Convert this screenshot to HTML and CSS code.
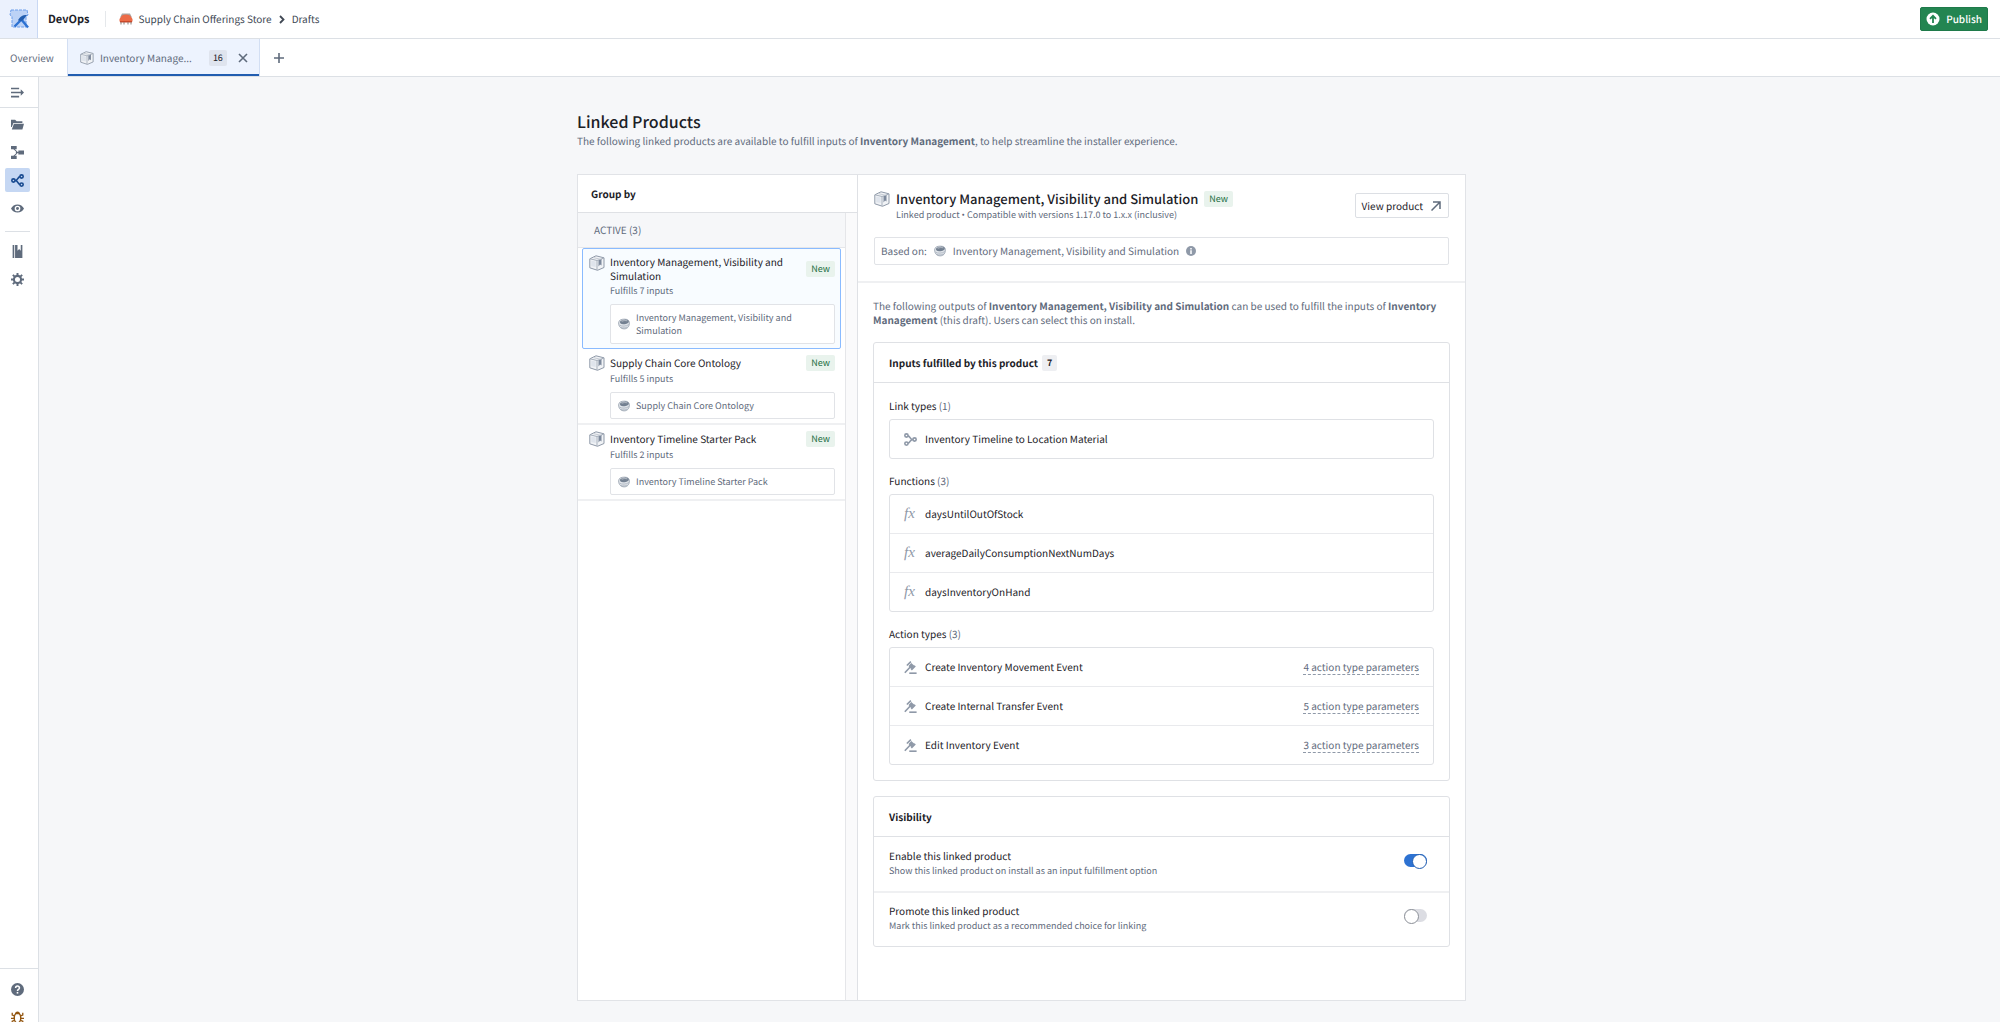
FILE: index.html
```html
<!DOCTYPE html>
<html lang="en">

<head>
    <meta charset="utf-8">
    <title>DevOps - Linked Products</title>
    <link rel="stylesheet" href="styles.css">
</head>

<body>
    <!-- shared icons -->
    <svg class="sprite" width="0" height="0">
        <symbol id="box" viewBox="0 0 16 16">
            <path d="M.8 3.800 7 .8 15 2.800v9.700l-6.500 2.800L.8 12.800z" fill="#f1f3f6" stroke="#8f99a8" />
            <path d="M1 3.800 8 5.500v9.500M8 5.500 15 3" fill="none" stroke="#a6afbb" />
            <path d="M2.200 5.500l4.500 1V12l-4.500-.8z" fill="#dfe4ec" />
            <path d="M9.500 5.300 12.500 4v6.500l-1.500-1-1.500 2z" fill="#7d899c" />
            <path d="M4 2.500l7.500 1.800" stroke="#c5cbd3" />
        </symbol>
        <symbol id="bowl" viewBox="0 0 16 16">
            <path d="M.8 6.500C.8 3 4 1.500 8.500 1.500s6.700 2 6.700 5c0 5-2.700 8-7 8s-7.400-3-7.400-8z" fill="#e1e5ea" stroke="#8f99a8" />
            <ellipse cx="8.500" cy="5.300" rx="6" ry="3" transform="rotate(-8 8 5)" fill="#738091" />
            <path d="M5 4.500c2-1.200 5-1.400 7.500-.7" stroke="#c5cbd3" fill="none" />
            <path d="M2 9.500c3 2 9 1.800 12.500-.8M4 12.700c2.500.8 6 .7 8.500-.7" stroke="#a6afbb" fill="none" />
        </symbol>
        <symbol id="link-type" viewBox="0 0 16 16">
            <g fill="none" stroke="currentColor" stroke-width="2">
                <circle cx="3" cy="3" r="2" />
                <circle cx="3" cy="13" r="2" />
                <circle cx="13" cy="8" r="2" />
                <path d="M5 3.500C8 4 7 8 11 8M5 12.500C8 12 7 8 11 8" />
            </g>
        </symbol>
        <symbol id="gavel" viewBox="0 0 16 16">
            <g fill="none" stroke="currentColor" stroke-width="2">
                <path d="M3.500 5.500 8.500.8M9 11l4.800-5M1 14.500 8 7" />
                <path d="M6.500 15h9" />
            </g>
            <path d="M5.500 6 9 2.500l4 3.500-4 4z" fill="currentColor" />
        </symbol>
    </svg>

    <header class="topbar">
        <a class="logo" href="#" aria-label="Home">
            <svg width="20" height="20" viewBox="0 0 20 20">
                <path d="M2 1h16l1 5-2 1.500V18H3V7.500L1 6z" fill="#bcd2f6" stroke="#6d9eeb" stroke-dasharray="3 1" />
                <path d="M5.500 17.500 14 9M12 10l7 8.500" stroke="#2d72d2" stroke-width="2.400" fill="none" />
                <path d="M9 11.500c1.500-3.500 4-5.500 9-5.500l-3.500 4.500-2 1.500z" fill="#215db0" />
            </svg>
        </a>
        <span class="app-name">DevOps</span>
        <nav class="crumbs">
            <svg width="14" height="12" viewBox="0 0 14 12">
                <path d="M3 .5h8l2 4H1z" fill="#a9a6a4" />
                <path d="M3 2.500Q7 .5 11 2.500L13.500 6v2.500H.5V6z" fill="#ec6b47" />
                <path d="M1 8h12v1.500H1z" fill="#c9492b" />
                <path d="M2 9v2.500M5 9v2.500M9 9v2.500M12 9v2.500" stroke="#8a7f7b" />
            </svg>
            <a href="#">Supply Chain Offerings Store</a>
            <svg class="chevron" width="6" height="9" viewBox="0 0 6 9">
                <path d="m1 1 3.500 3.500L1 8" fill="none" stroke="currentColor" stroke-width="1.800" />
            </svg>
            <a href="#">Drafts</a>
        </nav>
        <button class="publish">
            <svg width="14" height="14" viewBox="0 0 14 14">
                <circle cx="7" cy="7" r="6.500" fill="#fff" />
                <path d="M7 11V4M4 6.800l3-3 3 3" fill="none" stroke="#238551" stroke-width="1.800" />
            </svg>
            Publish
        </button>
    </header>

    <nav class="tabs">
        <a class="tab" href="#">Overview</a>
        <div class="tab tab-active">
            <svg width="14" height="14"><use href="#box" /></svg>
            <a class="tab-name" href="#">Inventory Manage...</a>
            <span class="count">16</span>
            <button class="icon-btn" aria-label="Close tab">
                <svg width="10" height="10" viewBox="0 0 10 10">
                    <path d="m1 1 8 8M9 1 1 9" stroke="currentColor" stroke-width="1.600" />
                </svg>
            </button>
        </div>
        <button class="icon-btn add-tab" aria-label="Add tab">
            <svg width="10" height="10" viewBox="0 0 10 10">
                <path d="M5 0v10M0 5h10" stroke="currentColor" stroke-width="1.600" />
            </svg>
        </button>
    </nav>

    <div class="body">
        <aside class="sidebar">
            <div class="side-top">
                <button class="side-btn" aria-label="Expand menu">
                    <svg width="14" height="14" viewBox="0 0 16 16">
                        <path d="M0 2h10v2H0zM0 7h10v2H0zM0 12h10v2H0zM12 4l4 4-4 4V9h-2V7h2z" />
                    </svg>
                </button>
            </div>
            <div class="side-group">
                <button class="side-btn" aria-label="Files">
                    <svg width="14" height="14" viewBox="0 0 16 16">
                        <path d="M0 2h5l2 2h7v2H3L1 11H0zM3.600 7H16l-2 7H1z" />
                    </svg>
                </button>
                <button class="side-btn" aria-label="Lineage">
                    <svg width="14" height="14" viewBox="0 0 16 16">
                        <path d="M0 0h7v4H0zM0 12h7v4H0zM9 5.500h7v5H9z" />
                        <path d="M3 3 8 8l-5 5M6 8h4" fill="none" stroke="currentColor" stroke-width="1.300" />
                    </svg>
                </button>
                <button class="side-btn side-active" aria-label="Linked products">
                    <svg width="14" height="14" viewBox="0 0 16 16">
                        <g fill="none" stroke="currentColor" stroke-width="2">
                            <circle cx="3" cy="8" r="2" />
                            <circle cx="13" cy="3" r="2" />
                            <circle cx="13" cy="13" r="2" />
                            <path d="M5 8C9 8 8 4 11 3M5 8c4 0 3 4 6 5" />
                        </g>
                    </svg>
                </button>
                <button class="side-btn" aria-label="Preview">
                    <svg width="14" height="14" viewBox="0 0 16 16">
                        <path fill-rule="evenodd" d="M8 3C4.500 3 1.500 5 0 8c1.500 3 4.500 5 8 5s6.500-2 8-5c-1.500-3-4.500-5-8-5zm0 1.500a3.500 3.500 0 1 1 0 7 3.500 3.500 0 0 1 0-7z" />
                        <circle cx="8" cy="8" r="1.800" />
                    </svg>
                </button>
            </div>
            <div class="side-group side-group-second">
                <button class="side-btn" aria-label="Documentation">
                    <svg width="14" height="14" viewBox="0 0 16 16">
                        <path d="M2 0h2v16H2zM5 0h3v7l2-2 2 2V0h2v16H5z" />
                    </svg>
                </button>
                <button class="side-btn" aria-label="Settings">
                    <svg width="14" height="14" viewBox="0 0 16 16">
                        <circle cx="8" cy="8" r="4.400" fill="none" stroke="currentColor" stroke-width="2.600" />
                        <path d="M8 0v3M8 13v3M0 8h3M13 8h3M2.300 2.300l2.200 2.200M11.500 11.500l2.200 2.200M2.300 13.700l2.200-2.200M11.500 4.500l2.200-2.200" stroke="currentColor" stroke-width="2.400" />
                    </svg>
                </button>
            </div>
            <div class="side-bottom">
                <button class="side-btn" aria-label="Help">
                    <svg width="14" height="14" viewBox="0 0 16 16">
                        <circle cx="8" cy="8" r="8" />
                        <path d="M5.700 6.200C5.700 3 10.400 3.100 10.400 6 10.400 7.800 8 7.800 8 9.700" fill="none" stroke="#fff" stroke-width="1.900" />
                        <path d="M7 11h2v2H7z" fill="#fff" />
                    </svg>
                </button>
                <button class="side-btn side-bug" aria-label="Report a bug">
                    <svg width="14" height="14" viewBox="0 0 16 16">
                        <ellipse cx="8" cy="8.500" rx="4" ry="6" fill="none" stroke="currentColor" stroke-width="1.800" />
                        <path d="M5 4a3 3.500 0 0 1 6 0z" />
                        <path d="M4.500 6 1.500 5V2M11.500 6l3-1V2M4 9H0M12 9h4M4.500 11.500l-3 1V15M11.500 11.500l3 1V15" fill="none" stroke="currentColor" stroke-width="1.600" />
                    </svg>
                </button>
            </div>
        </aside>

        <main class="content">
            <h1>Linked Products</h1>
            <p class="intro">The following linked products are available to fulfill inputs of <b>Inventory Management</b>, to help streamline the installer experience.</p>

            <div class="panel">
                <section class="groups">
                    <h2 class="groups-title">Group by</h2>
                    <div class="groups-scroll">
                        <h3 class="groups-label">ACTIVE (3)</h3>
                        <a class="product product-selected" href="#">
                            <svg width="16" height="16"><use href="#box" /></svg>
                            <div class="product-body">
                                <div class="product-head">
                                    <span class="product-name">Inventory Management, Visibility and Simulation</span>
                                    <span class="new">New</span>
                                </div>
                                <div class="small">Fulfills 7 inputs</div>
                                <div class="source">
                                    <svg width="12" height="12"><use href="#bowl" /></svg>
                                    <span>Inventory Management, Visibility and Simulation</span>
                                </div>
                            </div>
                        </a>
                        <a class="product" href="#">
                            <svg width="16" height="16"><use href="#box" /></svg>
                            <div class="product-body">
                                <div class="product-head">
                                    <span class="product-name">Supply Chain Core Ontology</span>
                                    <span class="new">New</span>
                                </div>
                                <div class="small">Fulfills 5 inputs</div>
                                <div class="source">
                                    <svg width="12" height="12"><use href="#bowl" /></svg>
                                    <span>Supply Chain Core Ontology</span>
                                </div>
                            </div>
                        </a>
                        <a class="product" href="#">
                            <svg width="16" height="16"><use href="#box" /></svg>
                            <div class="product-body">
                                <div class="product-head">
                                    <span class="product-name">Inventory Timeline Starter Pack</span>
                                    <span class="new">New</span>
                                </div>
                                <div class="small">Fulfills 2 inputs</div>
                                <div class="source">
                                    <svg width="12" height="12"><use href="#bowl" /></svg>
                                    <span>Inventory Timeline Starter Pack</span>
                                </div>
                            </div>
                        </a>
                    </div>
                </section>

                <section class="detail">
                    <div class="detail-head">
                        <div class="detail-row">
                            <svg width="16" height="16"><use href="#box" /></svg>
                            <div class="detail-text">
                                <div class="detail-title">
                                    <h2>Inventory Management, Visibility and Simulation</h2>
                                    <span class="new">New</span>
                                </div>
                                <div class="small">Linked product <span class="dot">•</span> Compatible with versions 1.17.0 to 1.x.x (inclusive)</div>
                            </div>
                            <button class="view-btn">
                                View product
                                <svg width="10" height="10" viewBox="0 0 10 10">
                                    <path d="M.5 9.500 9 1M2 1h7v7" fill="none" stroke="#5f6b7c" stroke-width="1.500" />
                                </svg>
                            </button>
                        </div>
                        <div class="based-on">
                            <span>Based on:</span>
                            <svg width="12" height="12"><use href="#bowl" /></svg>
                            <span>Inventory Management, Visibility and Simulation</span>
                            <svg width="10" height="10" viewBox="0 0 10 10">
                                <circle cx="5" cy="5" r="5" fill="#8f99a8" />
                                <path d="M5 2v1.500M5 4.300V8" stroke="#fff" stroke-width="1.500" />
                            </svg>
                        </div>
                    </div>

                    <div class="detail-body">
                        <p class="outputs">The following outputs of <b>Inventory Management, Visibility and Simulation</b> can be used to fulfill the inputs of <b>Inventory Management</b> (this draft). Users can select this on install.</p>

                        <div class="card">
                            <h3 class="card-head">Inputs fulfilled by this product <span class="count count-light">7</span></h3>
                            <div class="card-body">
                                <h4>Link types <span>(1)</span></h4>
                                <ul class="rows">
                                    <li>
                                        <svg width="13" height="13"><use href="#link-type" /></svg>
                                        Inventory Timeline to Location Material
                                    </li>
                                </ul>
                                <h4>Functions <span>(3)</span></h4>
                                <ul class="rows">
                                    <li><i class="fx">fx</i>daysUntilOutOfStock</li>
                                    <li><i class="fx">fx</i>averageDailyConsumptionNextNumDays</li>
                                    <li><i class="fx">fx</i>daysInventoryOnHand</li>
                                </ul>
                                <h4>Action types <span>(3)</span></h4>
                                <ul class="rows">
                                    <li>
                                        <svg width="13" height="13"><use href="#gavel" /></svg>
                                        Create Inventory Movement Event
                                        <button class="params">4 action type parameters</button>
                                    </li>
                                    <li>
                                        <svg width="13" height="13"><use href="#gavel" /></svg>
                                        Create Internal Transfer Event
                                        <button class="params">5 action type parameters</button>
                                    </li>
                                    <li>
                                        <svg width="13" height="13"><use href="#gavel" /></svg>
                                        Edit Inventory Event
                                        <button class="params">3 action type parameters</button>
                                    </li>
                                </ul>
                            </div>
                        </div>

                        <div class="card">
                            <h3 class="card-head">Visibility</h3>
                            <div class="setting">
                                <label for="enable">
                                    Enable this linked product
                                    <span class="small">Show this linked product on install as an input fulfillment option</span>
                                </label>
                                <input class="switch" type="checkbox" id="enable" checked>
                            </div>
                            <div class="setting">
                                <label for="promote">
                                    Promote this linked product
                                    <span class="small">Mark this linked product as a recommended choice for linking</span>
                                </label>
                                <input class="switch" type="checkbox" id="promote">
                            </div>
                        </div>
                    </div>
                </section>
            </div>
        </main>
    </div>
</body>

</html>
```

FILE: styles.css
```css
* {
    box-sizing: border-box;
}

body {
    margin: 0;
    height: 100vh;
    overflow: hidden;
    display: flex;
    flex-direction: column;
    background: #f6f7f9;
    color: #1c2127;
    font-family: "Noto Sans CJK SC", "Noto Sans", sans-serif;
    font-size: 10px;
    line-height: 14px;
    text-rendering: geometricPrecision;
}

h1, h2, h3, h4, p, ul {
    margin: 0;
    padding: 0;
    font-size: inherit;
    font-weight: normal;
}

a {
    color: inherit;
    text-decoration: none;
}

button {
    font: inherit;
    color: inherit;
    text-rendering: inherit;
    padding: 0;
    border: 0;
    background: none;
    cursor: pointer;
}

svg {
    display: block;
    flex: none;
}

.sprite {
    position: absolute;
}

/* top bar */
.topbar {
    flex: none;
    display: flex;
    align-items: center;
    height: 39px;
    padding-right: 12px;
    background: #fff;
    border-bottom: 1px solid #dce0e5;
}

.logo {
    display: flex;
    align-items: center;
    justify-content: center;
    width: 38px;
    height: 38px;
    background: #ebf1fd;
    border-right: 1px solid #c9d8f3;
}

.app-name {
    margin-left: 10px;
    font-size: 11px;
    font-weight: 700;
}

.crumbs {
    display: flex;
    align-items: center;
    gap: 5px;
    height: 16px;
    margin-left: 16px;
    padding-left: 13px;
    border-left: 1px solid #e5e8eb;
    color: #404854;
}

.chevron {
    margin: 0 2px;
}

.publish {
    display: flex;
    align-items: center;
    gap: 6px;
    height: 24px;
    margin-left: auto;
    padding: 0 5px;
    border-radius: 2px;
    background: #238551;
    border: 1px solid #1f7a4a;
    color: #fff;
    font-weight: 500;
}

/* tabs */
.tabs {
    flex: none;
    display: flex;
    height: 38px;
    background: #fff;
    border-bottom: 1px solid #dce0e5;
    color: #5f6b7c;
}

.tab {
    display: flex;
    align-items: center;
    padding: 0 13px 0 10px;
}

.tab-active {
    gap: 6px;
    padding: 0 11px 0 12px;
    background: #edf3fe;
    border: 1px solid #d3dff3;
    border-width: 0 1px;
    box-shadow: inset 0 -2px #215db0;
}

.tab-name {
    min-width: 98px;
    white-space: nowrap;
}

.count {
    margin: 0 5px;
    padding: 1px 4px;
    border-radius: 2px;
    background: #dfe4ee;
    color: #1c2127;
    font-size: 9px;
}

.count-light {
    margin: 0 4px;
    padding: 1px 5px;
    background: #eeeff2;
}

.icon-btn {
    display: flex;
    align-items: center;
    justify-content: center;
    width: 10px;
}

.add-tab {
    width: 38px;
}

/* sidebar */
.body {
    flex: 1;
    min-height: 0;
    display: flex;
}

.sidebar {
    flex: none;
    display: flex;
    flex-direction: column;
    width: 39px;
    background: #fff;
    border-right: 1px solid #dce0e5;
    color: #5f6b7c;
}

.side-top {
    padding: 3px 5px;
    border-bottom: 1px solid #dce0e5;
}

.side-group {
    display: flex;
    flex-direction: column;
    gap: 4px;
    padding: 4px 5px 0;
}

.side-group-second {
    margin: 11px 8px 0 5px;
    padding: 7px 0;
    border-top: 1px solid #dce0e5;
}

.side-btn {
    display: flex;
    align-items: center;
    justify-content: center;
    width: 25px;
    height: 24px;
    border-radius: 2px;
}

.side-btn svg {
    width: 13px;
    height: 13px;
    fill: currentColor;
}

.side-active {
    background: #c5d7f3;
    color: #184a90;
}

.side-bottom {
    display: flex;
    flex-direction: column;
    gap: 4px;
    height: 54px;
    margin-top: auto;
    padding: 8px 5px 0;
    border-top: 1px solid #dce0e5;
}

.side-bottom .side-btn {
    flex: none;
}

.side-bug {
    color: #935610;
}

/* page */
.content {
    flex: 1;
    display: flex;
    flex-direction: column;
    max-width: 893px;
    margin: 0 auto;
    padding: 33px 0 21px 4px;
}

h1 {
    font-size: 16px;
    font-weight: 500;
    line-height: 22px;
}

.intro {
    color: #5f6b7c;
    line-height: 17px;
    margin-bottom: 25px;
}

b {
    font-weight: 700;
}

.panel {
    flex: 1;
    display: flex;
    background: #fff;
    border: 1px solid #e1e3e7;
}

.groups {
    flex: none;
    display: flex;
    flex-direction: column;
    width: 280px;
    border-right: 1px solid #dfe1e5;
}

.groups-title {
    padding: 12px 13px 11px;
    border-bottom: 1px solid #dfe1e5;
    font-weight: 700;
}

.groups-scroll {
    flex: 1;
    margin-right: 11px;
    border-right: 1px solid #e5e6e9;
    box-shadow: 11px 0 #fafafb;
}

.groups-label {
    padding: 10px 16px;
    background: #f6f7f9;
    border-bottom: 1px solid #e5e6e9;
    color: #5f6b7c;
}

.product {
    display: flex;
    gap: 5px;
    padding: 6px 10px 4px 11px;
    border-bottom: 2px solid #eff0f2;
}

.product-selected {
    margin: 0 4px;
    padding: 6px 5px 4px 6px;
    background: #f8fcff;
    border: 1px solid #8abbff;
    border-radius: 2px;
}

.product-body {
    flex: 1;
}

.product-head {
    display: flex;
    align-items: center;
    justify-content: space-between;
    gap: 8px;
}

.small {
    display: block;
    color: #5f6b7c;
    font-size: 9px;
    line-height: 16px;
}

.dot {
    font-family: "Open Sans", sans-serif;
}

.new {
    flex: none;
    padding: 1px 5px;
    border-radius: 2px;
    background: #e9f3ed;
    color: #1c6e42;
    font-size: 9px;
}

.source {
    display: flex;
    align-items: center;
    gap: 6px;
    margin-top: 5px;
    padding: 6px 7px;
    background: #fff;
    border: 1px solid #e1e3e7;
    border-radius: 2px;
    color: #5f6b7c;
    font-size: 9px;
    line-height: 13px;
}

.product-selected .source {
    padding-right: 32px;
}

/* detail */
.detail {
    flex: 1;
    min-width: 0;
}

.detail-head {
    padding: 16px;
    border-bottom: 2px solid #eff0f2;
}

.detail-row {
    display: flex;
    gap: 6px;
}

.detail-text {
    flex: 1;
}

.detail-title {
    display: flex;
    align-items: center;
    gap: 6px;
}

.detail-title h2 {
    font-size: 13px;
    font-weight: 500;
}

.view-btn {
    display: flex;
    align-items: center;
    gap: 8px;
    height: 25px;
    margin-top: 2px;
    padding: 0 7px 0 6px;
    border: 1px solid #dcdfe4;
    border-radius: 2px;
}

.based-on {
    display: flex;
    align-items: center;
    gap: 7px;
    margin-top: 14px;
    padding: 6px;
    border: 1px solid #e1e3e7;
    border-radius: 2px;
    color: #5f6b7c;
}

.detail-body {
    padding: 16px 15px;
}

.outputs {
    color: #5f6b7c;
}

.card {
    margin-top: 15px;
    border: 1px solid #dfe1e5;
    border-radius: 3px;
}

.card-head {
    display: flex;
    align-items: center;
    height: 40px;
    padding: 0 15px;
    border-bottom: 1px solid #dfe1e5;
    font-weight: 700;
}

.card-body {
    padding: 1px 15px 15px;
}

.card-body h4 {
    padding: 15px 0 6px;
}

.card-body h4 span {
    color: #5f6b7c;
}

.rows {
    border: 1px solid #dfe1e5;
    border-radius: 3px;
    list-style: none;
}

.rows li {
    box-sizing: content-box;
    display: flex;
    align-items: center;
    gap: 8px;
    height: 38px;
    padding: 0 14px;
}

.rows li + li {
    border-top: 1px solid #e9eaed;
}

.rows svg,
.fx {
    color: #8f99a8;
}

.fx {
    width: 13px;
    font-family: "Liberation Serif", serif;
    font-size: 15px;
}

.params {
    margin-left: auto;
    border-bottom: 1px dashed #8f99a8;
    color: #5f6b7c;
}

.setting {
    display: flex;
    align-items: flex-start;
    padding: 12px 22px 12px 15px;
}

.setting + .setting {
    padding-top: 11px;
    border-top: 2px solid #eff0f2;
}

.switch {
    appearance: none;
    display: flex;
    width: 23px;
    height: 13px;
    margin: 5px 0 0 auto;
    border-radius: 7px;
    background: #dcdde3;
}

.switch::before {
    content: "";
    width: 13px;
    height: 13px;
    border: 1px solid #8b8f97;
    border-radius: 50%;
    background: #fff;
}

.switch:checked {
    justify-content: flex-end;
    background: #2d72d2;
}

.switch:checked::before {
    border-color: #215db0;
}
```
